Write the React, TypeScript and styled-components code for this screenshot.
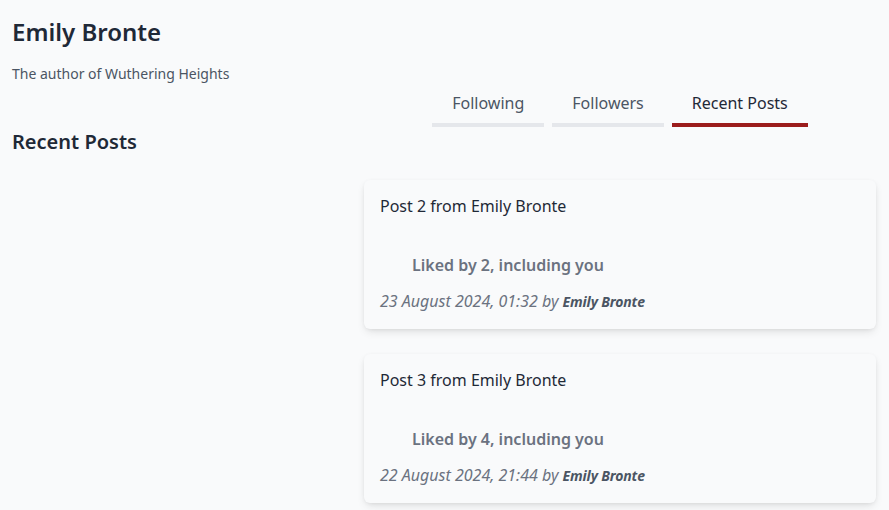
import React from "react";
import styled, { createGlobalStyle } from "styled-components";

const GlobalStyle = createGlobalStyle`
  html, body {
    margin: 0;
    padding: 0;
    background: #f9fafb;
  }
  body {
    font-family: "Noto Sans", "Open Sans", sans-serif;
    color: #1f2937;
  }
  * { box-sizing: border-box; }
`;

const Page = styled.div`
  padding: 12px 13px 12px 12px;
  min-height: 510px;
`;

const Name = styled.h1`
  margin: 0;
  padding-top: 2px;
  font-size: 24px;
  line-height: 36px;
  font-weight: 600;
  color: #1f2937;
`;

const Bio = styled.p`
  margin: 14px 0 0;
  font-size: 14px;
  line-height: 20px;
  color: #4b5563;
`;

const TabsRow = styled.div`
  display: grid;
  grid-template-columns: 1fr 512px;
  margin-top: -1px;
`;

const Tabs = styled.nav`
  grid-column: 2;
  display: flex;
  justify-content: center;
  gap: 8px;
`;

const Tab = styled.button<{ $active?: boolean }>`
  font-family: inherit;
  font-size: 16px;
  line-height: 24px;
  background: none;
  border: none;
  padding: 8px 20px;
  border-bottom: 4px solid ${(p) => (p.$active ? "#9b1c1c" : "#e5e7eb")};
  color: ${(p) => (p.$active ? "#1f2937" : "#4b5563")};
  cursor: pointer;
`;

const SectionTitle = styled.h2`
  margin: 1px 0 0;
  font-size: 20px;
  line-height: 28px;
  font-weight: 600;
  color: #1f2937;
`;

const PostList = styled.div`
  display: grid;
  grid-template-columns: 1fr 512px;
  margin-top: 24px;
`;

const Posts = styled.div`
  grid-column: 2;
  display: flex;
  flex-direction: column;
  gap: 25px;
`;

const Card = styled.article`
  background: #f9fafb;
  border-radius: 6px;
  padding: 15px 16px;
  box-shadow: 0 4px 10px -2px rgba(0, 0, 0, 0.12), 0 1px 4px -1px rgba(0, 0, 0, 0.08);
`;

const PostText = styled.p`
  margin: -1px 0 0;
  font-size: 16px;
  line-height: 24px;
  color: #1f2937;
`;

const Likes = styled.div`
  margin-top: 35px;
  padding-left: 32px;
  font-size: 16px;
  line-height: 24px;
  font-weight: 600;
  color: #6b7280;
`;

const Meta = styled.p`
  margin: 12px 0 0;
  font-size: 16px;
  line-height: 24px;
  font-style: italic;
  color: #6b7280;
`;

const Author = styled.span`
  font-size: 14px;
  font-weight: 700;
  letter-spacing: -0.15px;
  color: #4b5563;
`;

const posts = [
  { id: 2, likes: 2, date: "23 August 2024, 01:32" },
  { id: 3, likes: 4, date: "22 August 2024, 21:44" },
];

export default function App() {
  return (
    <>
      <GlobalStyle />
      <Page>
        <Name>Emily Bronte</Name>
        <Bio>The author of Wuthering Heights</Bio>
        <TabsRow>
          <Tabs>
            <Tab>Following</Tab>
            <Tab>Followers</Tab>
            <Tab $active>Recent Posts</Tab>
          </Tabs>
        </TabsRow>
        <SectionTitle>Recent Posts</SectionTitle>
        <PostList>
          <Posts>
            {posts.map((p) => (
              <Card key={p.id}>
                <PostText>Post {p.id} from Emily Bronte</PostText>
                <Likes>Liked by {p.likes}, including you</Likes>
                <Meta>
                  {p.date} by <Author>Emily Bronte</Author>
                </Meta>
              </Card>
            ))}
          </Posts>
        </PostList>
      </Page>
    </>
  );
}
